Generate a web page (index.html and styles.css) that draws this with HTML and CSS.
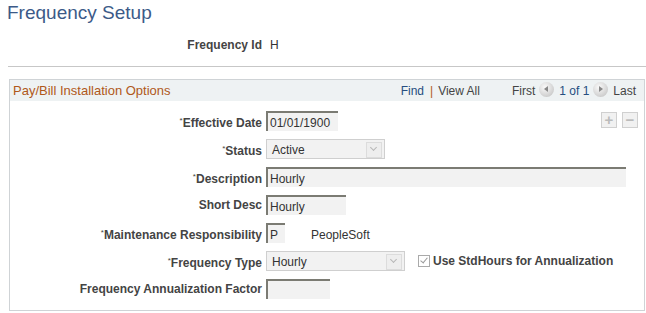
FILE: index.html
```html
<!DOCTYPE html>
<html lang="en">
<head>
    <meta charset="UTF-8">
    <title>Frequency Setup</title>
    <link rel="stylesheet" href="styles.css">
</head>
<body>
    <h1 class="page-title">Frequency Setup</h1>

    <div class="key-row">
        <span class="key-label">Frequency Id</span>
        <span class="key-value">H</span>
    </div>

    <hr class="divider">

    <div class="grid-box">
        <div class="box-header">
            <span class="box-title">Pay/Bill Installation Options</span>
            <div class="nav">
                <a class="link">Find</a>
                <span class="pipe">|</span>
                <span class="muted">View All</span>
                <span class="muted first">First</span>
                <span class="circle prev"></span>
                <span class="link">1 of 1</span>
                <span class="circle next"></span>
                <span class="muted">Last</span>
            </div>
        </div>

        <div class="box-body">
            <div class="row-btns">
                <span class="sq-btn">+</span>
                <span class="sq-btn">&minus;</span>
            </div>

            <div class="form">
                <label class="lbl"><sup>*</sup>Effective Date</label>
                <div class="fld"><input class="edit w-date" value="01/01/1900" readonly></div>

                <label class="lbl"><sup>*</sup>Status</label>
                <div class="fld"><span class="drop w-status">Active<span class="drop-btn"></span></span></div>

                <label class="lbl"><sup>*</sup>Description</label>
                <div class="fld"><input class="edit w-descr" value="Hourly" readonly></div>

                <label class="lbl">Short Desc</label>
                <div class="fld"><input class="edit w-short" value="Hourly" readonly></div>

                <label class="lbl"><sup>*</sup>Maintenance Responsibility</label>
                <div class="fld"><input class="edit w-maint" value="P" readonly><span class="plain">PeopleSoft</span></div>

                <label class="lbl"><sup>*</sup>Frequency Type</label>
                <div class="fld">
                    <span class="drop w-type">Hourly<span class="drop-btn"></span></span>
                    <span class="check"></span>
                    <span class="check-lbl">Use StdHours for Annualization</span>
                </div>

                <label class="lbl">Frequency Annualization Factor</label>
                <div class="fld"><input class="edit w-factor" value="" readonly></div>
            </div>
        </div>
    </div>
</body>
</html>
```

FILE: styles.css
```css
body {
    margin: 0;
    font-family: "Liberation Sans", Arial, sans-serif;
    font-size: 12px;
    color: #333;
    background: #fff;
}

.page-title {
    margin: 0;
    padding: 1px 0 0 7px;
    font-size: 19px;
    font-weight: normal;
    color: #3c5a88;
    height: 26px;
    line-height: 24px;
}

.key-row {
    display: grid;
    grid-template-columns: 262px auto;
    column-gap: 8px;
    margin-top: 9px;
    height: 18px;
    line-height: 18px;
}

.key-label {
    text-align: right;
    font-weight: bold;
    color: #444;
}

.key-value {
    font-size: 12px;
}

.divider {
    margin: 12px 0 0 8px;
    border: none;
    border-top: 1px solid #c7c7c7;
    height: 0;
}

.grid-box {
    margin: 12px 1px 0 9px;
    border: 1px solid #cfd3d6;
    height: 230px;
}

.box-header {
    display: flex;
    align-items: center;
    justify-content: space-between;
    height: 21px;
    background: #eef2f3;
    padding: 0 8px 0 3px;
}

.box-title {
    color: #b0581a;
    font-size: 13px;
}

.nav {
    display: flex;
    align-items: center;
    font-size: 12px;
}

.link {
    color: #264e80;
}

.pipe {
    color: #b0581a;
    margin: 0 5px 0 6px;
}

.muted {
    color: #444;
}

.first {
    margin-left: 32px;
}

.circle {
    width: 15px;
    height: 15px;
    border-radius: 50%;
    background: radial-gradient(circle at 40% 35%, #fafafa, #cfcfcf 70%, #b8b8b8);
    margin: 0 5px 3px 4px;
    position: relative;
}

.circle::after {
    content: "";
    position: absolute;
    top: 4px;
    border-top: 3.5px solid transparent;
    border-bottom: 3.5px solid transparent;
}

.prev::after {
    left: 5px;
    border-right: 4px solid #888;
}

.next::after {
    left: 6px;
    border-left: 4px solid #888;
}

.box-body {
    position: relative;
}

.row-btns {
    position: absolute;
    right: 6px;
    top: 11px;
    display: flex;
    gap: 5px;
}

.sq-btn {
    width: 14px;
    height: 14px;
    border: 1px solid #d0d0d0;
    background: #f1f1f1;
    color: #bbb;
    font-weight: bold;
    font-size: 15px;
    line-height: 13px;
    text-align: center;
}

.form {
    display: grid;
    grid-template-columns: 252px auto;
    grid-auto-rows: 28px;
    column-gap: 4px;
    padding-top: 10px;
}

.lbl {
    text-align: right;
    font-weight: bold;
    color: #444;
    line-height: 20px;
}

.lbl sup {
    font-size: 8px;
    vertical-align: 4px;
    font-weight: normal;
}

.fld {
    display: flex;
    align-items: center;
    height: 20px;
}

.edit {
    box-sizing: border-box;
    height: 20px;
    margin: 0;
    padding: 1px 2px 0;
    border: none;
    border-top: 2px solid #7b7b73;
    border-left: 2px solid #7b7b73;
    background: #f2f2f2;
    font-family: "Liberation Sans", Arial, sans-serif;
    font-size: 12px;
    color: #333;
    outline: none;
}

.w-date { width: 72px; }
.w-descr { width: 360px; }
.w-short { width: 80px; }
.w-maint { width: 19px; }
.w-factor { width: 64px; }

.plain {
    margin-left: 26px;
    padding-top: 4px;
}

.drop {
    box-sizing: border-box;
    position: relative;
    height: 20px;
    border: 1px solid #cfcfcf;
    background: #f2f2f2;
    padding: 3px 0 0 5px;
    color: #333;
}

.w-status { width: 119px; }
.w-type { width: 139px; }

.drop-btn {
    position: absolute;
    right: 2px;
    top: 2px;
    width: 14px;
    height: 14px;
    border: 1px solid #dcdcdc;
    background: #eeeeee;
}

.drop-btn::after {
    content: "";
    position: absolute;
    left: 4px;
    top: 2px;
    width: 4px;
    height: 4px;
    border-right: 1.5px solid #b8b8b8;
    border-bottom: 1.5px solid #b8b8b8;
    transform: rotate(45deg);
}

.check {
    position: relative;
    box-sizing: border-box;
    width: 12px;
    height: 12px;
    margin-left: 13px;
    border: 1px solid #aaa;
    background: #fff;
}

.check::after {
    content: "";
    position: absolute;
    left: 3px;
    top: 0px;
    width: 3px;
    height: 6px;
    border-right: 1.5px solid #999;
    border-bottom: 1.5px solid #999;
    transform: rotate(40deg);
}

.check-lbl {
    margin-left: 3px;
    font-weight: bold;
    color: #444;
}
```
